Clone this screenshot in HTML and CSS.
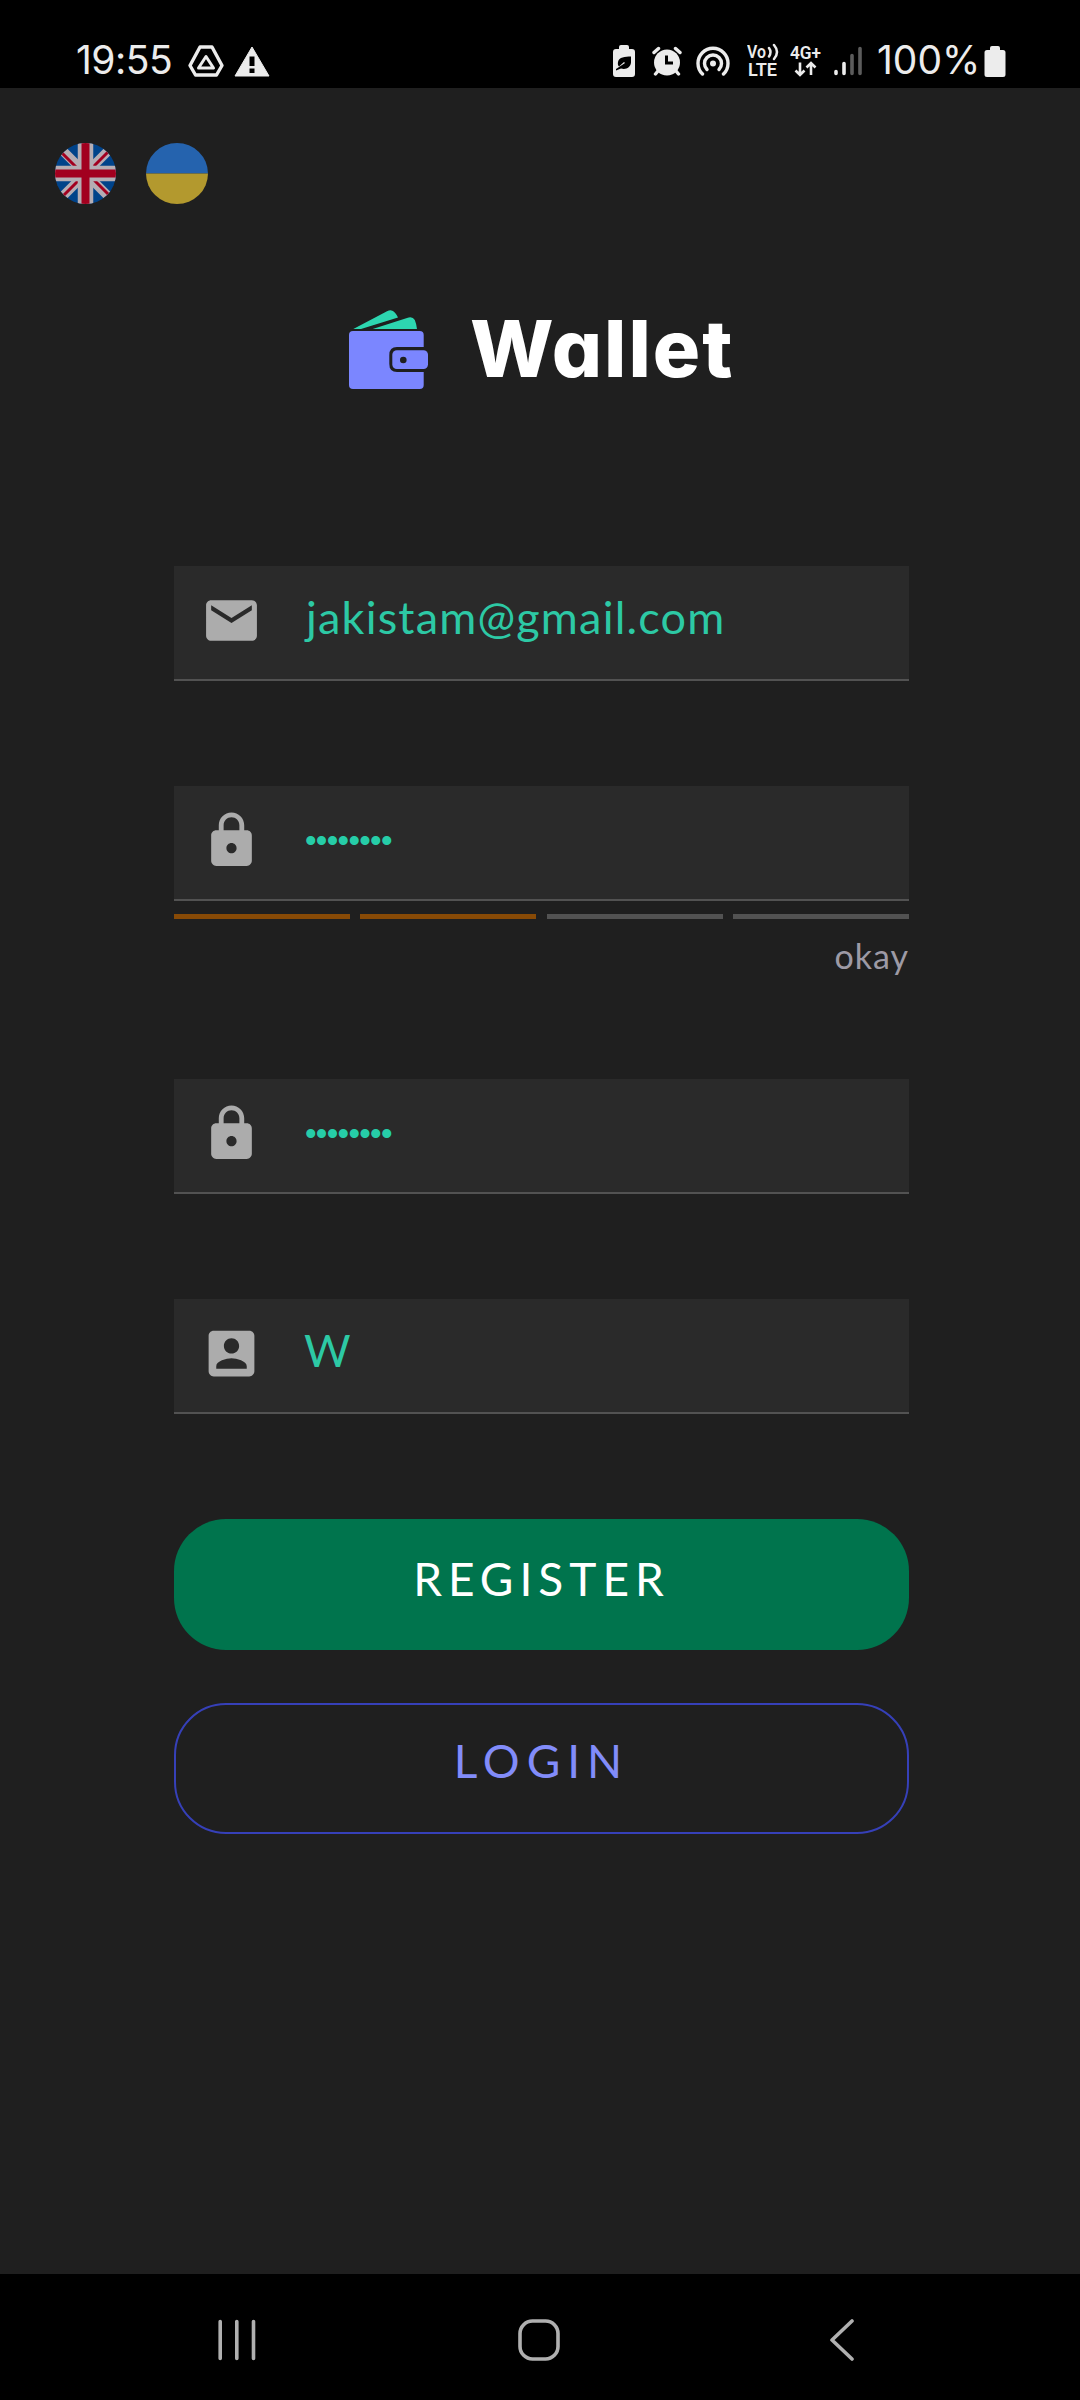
FILE: index.html
```
<!DOCTYPE html>
<html lang="en">
<head>
<meta charset="utf-8">
<title>Wallet</title>
<link rel="stylesheet" href="styles.css">
</head>
<body>
<header class="status">
  <span class="clock">19:55</span>
  <svg class="drive" width="36" height="32" viewBox="0 0 36 32" fill="none" stroke="#ececec" stroke-linejoin="round"><path d="M12 2H24L34 20.500L28.500 30H7.500L2 20.500Z" stroke-width="3.400"/><path d="M18 11.500L25.500 23H10.500Z" stroke-width="3"/></svg>
  <svg class="warn" width="36" height="31" viewBox="0 0 36 31"><path d="M18 1L35 30H1Z" fill="#ececec" stroke="#ececec" stroke-linejoin="round"/><path d="M15.500 10.500h5v9.500h-5zM15.500 22.500h5v4.500h-5z" fill="#000"/></svg>
  <span class="spacer"></span>
  <svg class="saver" width="22" height="32" viewBox="0 0 22 32"><path d="M6 4V2q0-2 2-2h6q2 0 2 2v2h3q3 0 3 3v22q0 3-3 3H3q-3 0-3-3V7q0-3 3-3Z" fill="#ececec"/><path d="M18 11.500C12 11.500 6 12 5 17c-.4 2 0 3.500 1 4.500L11 17l1 1-9 6v1.500L8 23.500c5 1.500 9.500-1 10-6Z" fill="#000"/></svg>
  <svg class="alarm" width="30" height="30" viewBox="0 0 30 30"><circle cx="15" cy="16.500" r="13" fill="#ececec"/><g stroke="#ececec" stroke-width="3.400" stroke-linecap="round"><path d="M2 6.500L6.500 2.500M28 6.500L23.500 2.500M6 25L3.500 28M24 25L26.500 28"/></g><path d="M14.500 9.500V17H21" fill="none" stroke="#000" stroke-width="3"/></svg>
  <svg class="hotspot" width="34" height="30" viewBox="0 0 34 30" fill="none" stroke="#ececec" stroke-width="3.400" stroke-linecap="round"><path d="M6.500 28A15 15 0 1 1 27.500 28"/><path d="M11 23.500A8.500 8.500 0 1 1 23 23.500"/><circle cx="17" cy="17.500" r="3" fill="#ececec" stroke="none"/></svg>
  <svg class="volte" width="32" height="42" viewBox="0 -4 32 42"><text class="vo" x="0" y="13.500" textLength="19" lengthAdjust="spacingAndGlyphs">Vo</text><path d="M22 4q3 4 0 8.500M27 1q6 7 0 14" fill="none" stroke="#ececec" stroke-width="2.500" stroke-linecap="round"/><text class="vo" x="1" y="31.500" textLength="29" lengthAdjust="spacingAndGlyphs">LTE</text></svg>
  <svg class="lte" width="32" height="42" viewBox="0 -4 32 42"><text class="vo" x="0" y="15" textLength="31" lengthAdjust="spacingAndGlyphs">4G+</text><path d="M10 18.500V31M5.500 26.500L10 31L14.500 26.500M21 31V19M16.500 23.500L21 19L25.500 23.500" fill="none" stroke="#ececec" stroke-width="2.600"/></svg>
  <svg class="signal" width="28" height="30" viewBox="0 0 28 30" stroke-width="3.600" stroke-linecap="round"><path d="M2 25.500V27.500M10 17.500V27.500" stroke="#ececec"/><path d="M18 9.500V27.500M26 2.500V27.500" stroke="#5c5c5c"/></svg>
  <span class="percent">100%</span>
  <svg class="battery" width="22" height="31" viewBox="0 0 22 31"><path d="M6 4V2q0-2 2-2h6q2 0 2 2v2h3q2.500 0 2.500 2.500v22q0 2.500-2.500 2.500H3q-2.500 0-2.500-2.500v-22Q.5 4 3 4Z" fill="#ececec"/></svg>
</header>
<main class="page">
  <div class="langs">
    <svg width="61" height="61" viewBox="0 0 61 61"><clipPath id="disc"><circle cx="30.500" cy="30.500" r="30.500"/></clipPath><g clip-path="url(#disc)"><path d="M0 0h61v61H0z" fill="#00438a"/><path d="M5 5L56 56M56 5L5 56" stroke="#b5adb3" stroke-width="9.500"/><path d="M7 10L26 29M54 8L35 27M7 54L26 35M54 52L35 33" stroke="#a2001f" stroke-width="3"/><path d="M30.500 0V61M0 30.500H61" stroke="#b5adb3" stroke-width="15.500"/><path d="M30.500 0V61M0 30.500H61" stroke="#a2001f" stroke-width="8"/></g></svg>
    <svg width="62" height="61" viewBox="0 0 62 61"><path d="M0 30.500a31 30.500 0 0 1 62 0z" fill="#2563ae"/><path d="M0 30.500a31 30.500 0 0 0 62 0z" fill="#b3992e"/></svg>
  </div>
  <div class="brand">
    <svg width="80" height="80" viewBox="0 0 80 80"><path d="M4.300 19L38 1.200Q43-1.500 46 2.700Q48 5 49 7.500L12 19ZM23.700 19L58 8Q63.500 6 65.800 10Q67.500 14 68 19Z" fill="#2dd6b0"/><rect y="21" width="74.700" height="58" rx="4" fill="#7b86ff"/><path d="M80 37H48Q40.300 37 40.300 45V54Q40.300 62 48 62H80Z" fill="#1f1f1f"/><rect x="43.300" y="40.300" width="35.700" height="18.700" rx="4.500" fill="#7b86ff"/><circle cx="54.300" cy="50" r="3.300" fill="#1f1f1f"/></svg>
    <h1 class="name">Wallet</h1>
  </div>
  <form class="form">
    <div class="field"><svg class="icon" viewBox="0 0 24 24"><path d="M20 4H4c-1.100 0-2 .9-2 2v12c0 1.100.9 2 2 2h16c1.100 0 2-.9 2-2V6c0-1.100-.9-2-2-2zm0 4l-8 5-8-5V6l8 5 8-5v2z"/></svg><span class="value">jakistam@gmail.com</span></div>
    <div class="field"><svg class="icon" viewBox="0 0 24 24"><path d="M18 8h-1V6c0-2.760-2.240-5-5-5S7 3.240 7 6v2H6c-1.100 0-2 .9-2 2v10c0 1.100.9 2 2 2h12c1.100 0 2-.9 2-2V10c0-1.100-.9-2-2-2zm-6 9c-1.100 0-2-.9-2-2s.9-2 2-2 2 .9 2 2-.9 2-2 2zm3.100-9H8.900V6c0-1.710 1.390-3.100 3.100-3.100s3.100 1.390 3.100 3.100v2z"/></svg><span class="secret">••••••••</span></div>
    <div class="meter"><i class="on"></i><i class="on"></i><i></i><i></i></div>
    <div class="hint">okay</div>
    <div class="field"><svg class="icon" viewBox="0 0 24 24"><path d="M18 8h-1V6c0-2.760-2.240-5-5-5S7 3.240 7 6v2H6c-1.100 0-2 .9-2 2v10c0 1.100.9 2 2 2h12c1.100 0 2-.9 2-2V10c0-1.100-.9-2-2-2zm-6 9c-1.100 0-2-.9-2-2s.9-2 2-2 2 .9 2 2-.9 2-2 2zm3.100-9H8.900V6c0-1.710 1.390-3.100 3.100-3.100s3.100 1.390 3.100 3.100v2z"/></svg><span class="secret">••••••••</span></div>
    <div class="field"><svg class="icon" viewBox="0 0 24 24"><path d="M3 5v14c0 1.100.89 2 2 2h14c1.100 0 2-.9 2-2V5c0-1.100-.9-2-2-2H5c-1.110 0-2 .9-2 2zm12 4c0 1.660-1.340 3-3 3s-3-1.340-3-3 1.340-3 3-3 3 1.340 3 3zm-9 8c0-2 4-3.100 6-3.100s6 1.100 6 3.100v1H6v-1z"/></svg><span class="value initial">W</span></div>
    <button class="btn register" type="button">REGISTER</button>
    <button class="btn login" type="button">LOGIN</button>
  </form>
</main>
<footer class="nav">
  <svg class="recents" width="38" height="42" viewBox="0 0 38 42"><path d="M2.200 2.500V39.500M18.800 2.500V39.500M35.500 2.500V39.500"/></svg>
  <svg class="home" width="42" height="42" viewBox="0 0 42 42"><rect x="2" y="2" width="38" height="38" rx="12.500"/></svg>
  <svg class="back" width="26" height="42" viewBox="0 0 26 42"><path d="M23 2L3 21L23 40"/></svg>
</footer>
</body>
</html>
```
FILE: styles.css
```
* { box-sizing: border-box; }
body {
  margin: 0;
  width: 1080px;
  height: 2400px;
  display: flex;
  flex-direction: column;
  background: #1f1f1f;
  font-family: Lato, sans-serif;
}
svg { display: block; flex: none; }

.status {
  height: 88px;
  padding: 34px 74px 0 76px;
  display: flex;
  align-items: center;
  background: #000;
  color: #ececec;
  font-family: Inter, sans-serif;
}
.clock, .percent { font-size: 39px; line-height: 40px; margin-bottom: 2px; white-space: nowrap; }
.clock { width: 97px; letter-spacing: -.5px; }
.percent { width: 103px; margin-left: 15px; }
.drive { margin-left: 15px; }
.warn { margin-left: 10px; }
.spacer { flex: 1; }
.alarm { margin-left: 17px; }
.hotspot { margin-left: 14px; }
.volte { margin-left: 17px; }
.lte { margin-left: 11px; }
.signal { margin-left: 12px; }
.battery { margin-left: 4px; }
.vo { font: 600 17.5px Roboto, sans-serif; fill: #ececec; }

.page { flex: 1; padding-top: 55px; }
.langs { display: flex; gap: 30px; padding-left: 55px; }
.brand {
  margin-top: 106px;
  padding-left: 349px;
  height: 80px;
  display: flex;
  align-items: center;
  gap: 41px;
}
.name {
  margin: 0 0 5px;
  color: #fff;
  font: 800 79px/80px Inter, sans-serif;
  font-feature-settings: "cv11";
  letter-spacing: 2px;
}

.form {
  width: 735px;
  margin: 176px 0 0 174px;
  display: flex;
  flex-direction: column;
}
.field {
  height: 115px;
  margin-bottom: 105px;
  padding-left: 27px;
  display: flex;
  align-items: center;
  gap: 44px;
  background: #2a2a2a;
  border-bottom: 2px solid #525252;
}
.icon { width: 61px; height: 61px; margin-bottom: 4px; fill: #acacac; }
.value {
  margin-bottom: 11px;
  color: #2dc9a5;
  font-size: 45px;
  line-height: 54px;
  letter-spacing: 1.2px;
}
.initial { margin-left: -2px; }
.secret {
  margin: 0 0 4px -1px;
  color: #26cda8;
  font: 33px/40px "Liberation Sans", sans-serif;
  letter-spacing: -.7px;
}
.field:has(+ .meter) { margin-bottom: 13px; }
.meter { display: grid; grid-template-columns: repeat(4, 1fr); gap: 10.5px; height: 5px; }
.meter i { background: #525252; }
.meter .on { background: #884a06; }
.hint {
  margin: 17px 0 103px;
  color: #9d9aa5;
  font-size: 34px;
  line-height: 40px;
  letter-spacing: 1px;
  text-align: right;
}
.btn {
  height: 131px;
  border-radius: 52px;
  border: 0;
  font: 46px/54px Lato, sans-serif;
}
.register { padding: 0 0 11px; background: #00744d; color: #fff; letter-spacing: 6px; }
.login {
  margin-top: 53px;
  padding: 0 0 15px;
  background: none;
  border: 2px solid #3640b8;
  color: #828cfa;
  letter-spacing: 7px;
}

.nav {
  height: 126px;
  padding-top: 45px;
  display: flex;
  background: #000;
}
.nav svg { fill: none; stroke: #b0b0b0; stroke-width: 3.6; stroke-linecap: round; stroke-linejoin: round; }
.recents { margin-left: 218px; }
.home { margin-left: 262px; }
.back { margin-left: 269px; }
```
